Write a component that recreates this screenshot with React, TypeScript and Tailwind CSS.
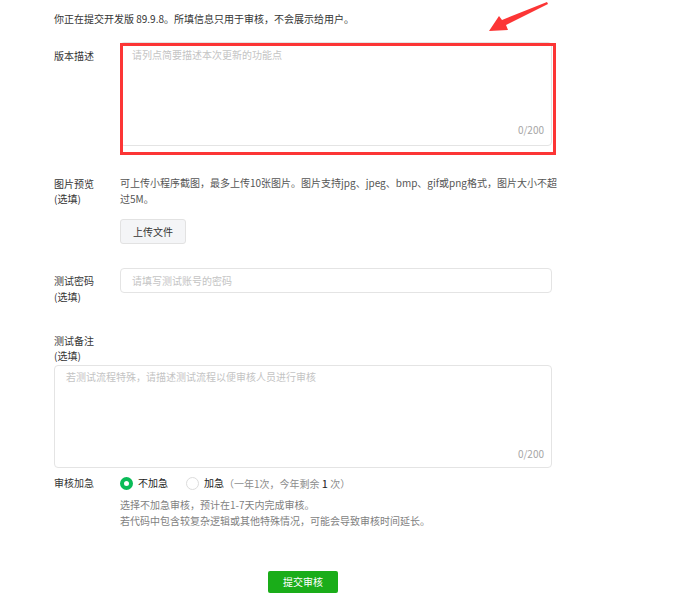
import React from "react";

const font = { fontFamily: '"Noto Sans CJK SC", "Liberation Sans", sans-serif' };

export default function App() {
  return (
    <div
      className="relative w-[687px] h-[596px] bg-white text-[10px] leading-4 text-[#353535] overflow-hidden"
      style={font}
    >
      <div className="pl-[54px] pt-[11px] w-[552px] flex flex-col">
        <div className="h-4 whitespace-nowrap">你正在提交开发版 89.9.8。所填信息只用于审核，不会展示给用户。</div>

        {/* 版本描述 */}
        <div className="mt-[15px] flex">
          <div className="w-[66px] pt-[6px] shrink-0">版本描述</div>
          <div className="relative w-[432px] h-[104px] border border-[#e4e4e4] rounded-[4px] px-[11px] pt-[4px]">
            <div className="text-[#c4c4c4]">请列点简要描述本次更新的功能点</div>
            <div className="absolute right-[7px] bottom-[7px] text-[#a6a6a6]">0/200</div>
          </div>
        </div>

        {/* 图片预览 */}
        <div className="mt-[29px] flex">
          <div className="w-[66px] shrink-0 leading-[15px] pt-px">
            <div>图片预览</div>
            <div>(选填)</div>
          </div>
          <div className="flex flex-col items-start">
            <div className="text-[#555555] whitespace-nowrap">
              可上传小程序截图，最多上传10张图片。图片支持jpg、jpeg、bmp、gif或png格式，图片大小不超
              <br />
              过5M。
            </div>
            <button className="mt-[12px] w-[66px] h-[25px] rounded-[3px] border border-[#e2e2e2] bg-[#f4f5f7] text-[#353535] text-[10px] flex items-center justify-center">
              上传文件
            </button>
          </div>
        </div>

        {/* 测试密码 */}
        <div className="mt-[24px] flex">
          <div className="w-[66px] pt-[5px] shrink-0">
            <div>测试密码</div>
            <div>(选填)</div>
          </div>
          <div className="w-[432px] h-[25px] border border-[#e4e4e4] rounded-[4px] px-[11px] flex items-center">
            <span className="text-[#c4c4c4]">请填写测试账号的密码</span>
          </div>
        </div>

        {/* 测试备注 */}
        <div className="mt-[28px] leading-[15px]">
          <div>测试备注</div>
          <div>(选填)</div>
        </div>
        <div className="mt-[2px] relative w-[498px] h-[103px] border border-[#e4e4e4] rounded-[4px] px-[11px] pt-[3px]">
          <div className="text-[#c4c4c4]">若测试流程特殊，请描述测试流程以便审核人员进行审核</div>
          <div className="absolute right-[7px] bottom-[5px] text-[#a6a6a6]">0/200</div>
        </div>

        {/* 审核加急 */}
        <div className="mt-[7px] flex">
          <div className="w-[66px] shrink-0">审核加急</div>
          <div className="flex flex-col">
            <div className="flex items-center h-4">
              <span className="w-[13px] h-[13px] rounded-full border-[4px] border-[#09bb57] bg-white box-border" />
              <span className="ml-[5px] text-[#222]">不加急</span>
              <span className="ml-[18px] w-[13px] h-[13px] rounded-full border border-[#dcdcdc] bg-white box-border" />
              <span className="ml-[5px] text-[#222]">加急</span>
              <span className="text-[#8c8c8c]">（一年1次，今年剩余 <span className="text-[#222] text-[11px]">1</span> 次）</span>
            </div>
            <div className="mt-[6px] text-[#7f7f7f]">
              <div>选择不加急审核，预计在1-7天内完成审核。</div>
              <div>若代码中包含较复杂逻辑或其他特殊情况，可能会导致审核时间延长。</div>
            </div>
          </div>
        </div>

        {/* 提交 */}
        <div className="mt-[42px] flex justify-center w-[498px]">
          <button className="w-[70px] h-[22px] rounded-[2px] bg-[#1aad19] text-white text-[10px] flex items-center justify-center">
            提交审核
          </button>
        </div>
      </div>

      {/* annotation: red box */}
      <div className="absolute left-[120px] top-[43px] w-[436px] h-[112px] border-[3px] border-[#fc3535] pointer-events-none" />
      {/* annotation: arrow */}
      <svg className="absolute left-0 top-0 pointer-events-none" width="687" height="60" viewBox="0 0 687 60">
        <polygon points="489,31 499,16 502,20 547,2 548,4 506,25 508,30" fill="#fc3535" />
      </svg>
    </div>
  );
}
